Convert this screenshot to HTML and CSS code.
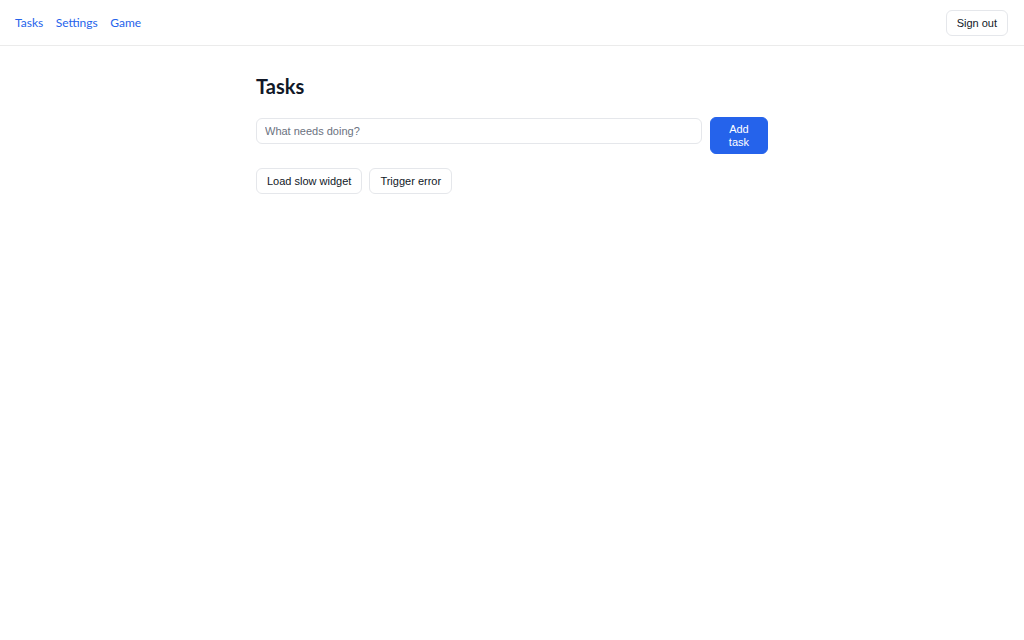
FILE: index.html
```html
<!DOCTYPE html>
<html lang="en">
<head>
<meta charset="utf-8">
<title>Tasks</title>
<link rel="stylesheet" href="styles.css">
</head>
<body>
<header class="topbar">
  <nav class="nav">
    <a class="nav-link" href="#">Tasks</a>
    <a class="nav-link" href="#">Settings</a>
    <a class="nav-link" href="#">Game</a>
  </nav>
  <button class="btn">Sign out</button>
</header>
<main class="main">
  <h1 class="title">Tasks</h1>
  <form class="add-form">
    <input class="task-input" type="text" placeholder="What needs doing?">
    <button class="btn btn-primary" type="button">Add task</button>
  </form>
  <div class="actions">
    <button class="btn">Load slow widget</button>
    <button class="btn">Trigger error</button>
  </div>
</main>
</body>
</html>
```
FILE: styles.css
```css
* { box-sizing: border-box; }
html, body { margin: 0; padding: 0; background: #fff; }
body {
  font-family: Lato, "Noto Sans", sans-serif;
  color: #111827;
}
.topbar {
  height: 46px;
  display: flex;
  align-items: center;
  justify-content: space-between;
  padding: 0 16px 0 15px;
  border-bottom: 1px solid #ebebeb;
}
.nav { display: flex; gap: 12.5px; }
.nav-link {
  color: #2563eb;
  text-decoration: none;
  font-size: 12px;
}
.btn {
  font-family: "Liberation Sans", Arial, sans-serif;
  font-size: 11px;
  color: #111827;
  background: #fff;
  border: 1px solid #e5e7eb;
  border-radius: 6px;
  padding: 6px 10px;
  line-height: normal;
}
.btn-primary {
  width: min-content;
  flex-shrink: 0;
  background: #2563eb;
  border-color: #2563eb;
  color: #fff;
  padding: 5px 18px;
  line-height: 12.5px;
}
.main {
  width: 512px;
  margin: 0 auto;
  padding-top: 28px;
}
.title {
  margin: 0;
  font-size: 20px;
  line-height: 24px;
  font-weight: 700;
}
.add-form {
  display: flex;
  align-items: flex-start;
  gap: 8px;
  margin-top: 19px;
}
.task-input {
  flex: 1 1 auto;
  min-width: 0;
  margin-top: 1px;
  font-family: "Liberation Sans", Arial, sans-serif;
  font-size: 11px;
  padding: 6px 8px;
  border: 1px solid #e5e7eb;
  border-radius: 6px;
  color: #111827;
  outline: none;
}
.task-input::placeholder { color: #6b7280; }
.actions {
  display: flex;
  gap: 7px;
  margin-top: 14px;
}
```
